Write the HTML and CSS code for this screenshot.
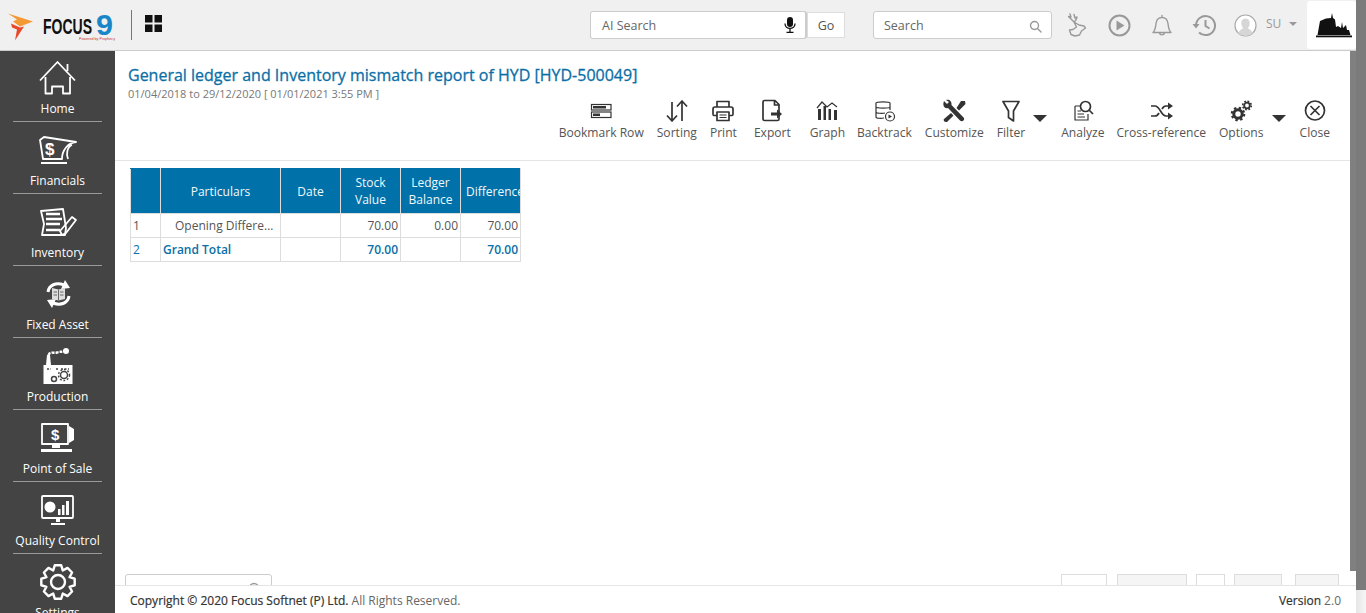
FILE: index.html
```html
<!DOCTYPE html>
<html lang="en">
<head>
<meta charset="utf-8">
<title>Focus 9</title>
<link rel="stylesheet" href="styles.css">
</head>
<body>
<div class="app">
  <header class="topbar">
    <div class="brand">
      <svg class="logo" width="110" height="31" viewBox="0 0 110 31">
        <path class="o1" d="M0 3.500 L25 11.500 L12 16.500 L5 11.500 L9 9.500 Z"/>
        <path class="o2" d="M3 13.500 L12 17.500 L16 16.500 L7 30.500 L9 19.500 L4 17.500 Z"/>
        <text class="focus" x="35" y="23.500" textLength="49" lengthAdjust="spacingAndGlyphs">FOCUS</text>
        <text class="nine" x="88" y="24.500" textLength="17" lengthAdjust="spacingAndGlyphs">9</text>
        <text class="tiny" x="71" y="30" textLength="36" lengthAdjust="spacingAndGlyphs">Powered by Prophecy</text>
      </svg>
      <span class="vline"></span>
      <svg class="appsgrid" width="17" height="17" viewBox="0 0 17 17"><rect width="7.5" height="7.5"/><rect x="9.5" width="7.5" height="7.5"/><rect y="9.5" width="7.5" height="7.5"/><rect x="9.5" y="9.5" width="7.5" height="7.5"/></svg>
    </div>
    <div class="aisearch">
      <div class="field field-ai"><span>AI Search</span>
        <svg width="12" height="16" viewBox="0 0 12 16"><rect x="3" y="0" width="6" height="10" rx="3" class="fk"/><path d="M1 6.5 C1 13 11 13 11 6.5 M6 12 V15 M2.500 15.400 H9.500" class="sk"/></svg>
      </div>
      <button class="go">Go</button>
    </div>
    <div class="field field-search"><span>Search</span>
      <svg width="13" height="13" viewBox="0 0 13 13"><circle cx="5.500" cy="5.500" r="4" class="sg"/><path d="M8.500 8.500 L12 12" class="sg"/></svg>
    </div>
    <div class="tools">
      <svg class="t-deer" width="20" height="24" viewBox="0 0 20 24"><path class="sg" d="M3 1 L4 4 L1.500 3.500 L5 7 L7 9 M7 1.500 L8 5 L10 4 L9 7 L7 9 L12 12 L17 13 L18.500 15 L14.500 18 L12.500 22 L8 23 L4 21.500 L2.500 17 L6 16.500 L9.500 14 L7 9"/></svg>
      <svg class="t-play" width="23" height="23" viewBox="0 0 23 23"><circle cx="11.500" cy="11.500" r="10" class="sg2"/><path d="M8.500 6.500 L16.500 11.500 L8.500 16.500 Z" class="fg"/></svg>
      <svg class="t-bell" width="22" height="23" viewBox="0 0 22 23"><path class="sg" d="M11 1.500 V3.500 M2 18.500 C4.500 16 4.500 13 5 9.500 C5.500 5.500 8 3.500 11 3.500 C14 3.500 16.500 5.500 17 9.500 C17.500 13 17.500 16 20 18.500 Z M8.500 19 C9 21.500 13 21.500 13.500 19"/></svg>
      <svg class="t-hist" width="24" height="23" viewBox="0 0 24 23"><path class="sg2" d="M4 11.500 A9.500 9.500 0 1 1 7 18.500"/><path class="fg" d="M0.500 10 H7.500 L4 14.500 Z"/><path class="sg2" d="M13.500 6 V12 L17.500 14.500"/></svg>
      <svg class="t-user" width="23" height="23" viewBox="0 0 23 23"><circle cx="11.500" cy="11.500" r="10.500" class="avatar"/><path class="avatar-f" d="M4.500 19.500 C5 15.500 8.500 15.500 9 14 C7.500 12 7 10 7.500 7.500 C8.500 3.500 14.500 3.500 15.500 7.500 C16 10 15.500 12 14 14 C14.500 15.500 18 15.500 18.500 19.500 C14.500 22.500 8.500 22.500 4.500 19.500 Z"/></svg>
      <span class="su">SU</span>
      <span class="su-caret"></span>
    </div>
    <div class="company">
      <svg width="36" height="26" viewBox="0 0 36 26"><path class="fk" d="M1.500 23 L4 9 L10 6.500 L15 6 L16 1 L17 6 L19 7.500 L20 15 L22 14 L25 16 L26 10 L27 16 L30 13 L31 18 L33 18 L34.500 23 Z"/><rect class="fk" x="0" y="23.500" width="36" height="1.800"/></svg>
    </div>
  </header>

  <div class="body-row">
    <nav class="sidebar">
      <a class="nav-item">
        <svg class="nav-icon" width="40" height="36" viewBox="0 0 40 36"><path class="sw" d="M2 20.500 L19.500 2 L37 20.500 M7.500 17 V33.500 H14 V26.500 H25 V33.500 H32 V17 M29.500 11 V4"/></svg>
        <span>Home</span>
      </a>
      <a class="nav-item">
        <svg class="nav-icon" width="40" height="36" viewBox="0 0 40 36"><path class="sw" d="M2 8 L6 5 L38 10 C30 11 24 18 24 27 H5 Z M34 13 C29 15 28 22 30 27"/><text class="dollar" x="7" y="23">$</text><rect class="fw" x="3" y="30" width="26" height="2"/></svg>
        <span>Financials</span>
      </a>
      <a class="nav-item">
        <svg class="nav-icon" width="40" height="36" viewBox="0 0 40 36"><path class="sw" d="M3 7 L25 5 L28 24 L27 31 L4 31 L6 20 Z"/><path class="swt" d="M8 10 H22 M8 15 H24 M8 20 H22 M8 26 H22"/><path class="sw" d="M22 27 L24 31 L28 29 L38 16 L34 13 Z"/></svg>
        <span>Inventory</span>
      </a>
      <a class="nav-item">
        <svg class="nav-icon" width="40" height="36" viewBox="0 0 40 36"><path class="swb" d="M10 16 C11 9 18 6 26 9 M31 20 C30 27 23 30 15 27"/><path class="fw" d="M27 4 L32 12 L23 13 Z M14 32 L9 24 L18 23 Z"/><path class="fbook" d="M14 12 L20.500 13.500 L27 12 V23 L20.500 24.500 L14 23 Z"/><path class="cut2" d="M20.500 13.500 V24.500 M15.500 16 H19 M15.500 19 H19 M22 16 H25.500 M22 19 H25.500"/></svg>
        <span>Fixed Asset</span>
      </a>
      <a class="nav-item">
        <svg class="nav-icon" width="40" height="36" viewBox="0 0 40 36"><path class="fw" d="M5.500 17 H8 L9 7 H12 L13 17 H34.500 V36 H5.500 Z"/><path class="smoke" d="M10.500 7 C12 3 16 5.500 19 4.500 C22 3.500 24 4 27 3"/><circle class="fw" cx="28" cy="3" r="3"/><circle class="gearcut" cx="26" cy="27" r="3.500"/><circle class="teethcut" cx="26" cy="27" r="5.500"/><circle class="gearcut" cx="16" cy="31" r="2.500"/><path class="cut" d="M9 21 H13 M18 21 H21 M23 21 H31"/></svg>
        <span>Production</span>
      </a>
      <a class="nav-item">
        <svg class="nav-icon" width="40" height="36" viewBox="0 0 40 36"><rect class="sw" x="4" y="4" width="26" height="20"/><text class="dollar2" x="13" y="20">$</text><path class="fw" d="M31 6 L36 9 V20 L31 23 Z M14 25 H22 V28 H14 Z M3 29 H34 V32 H3 Z"/></svg>
        <span>Point of Sale</span>
      </a>
      <a class="nav-item">
        <svg class="nav-icon" width="40" height="36" viewBox="0 0 40 36"><rect class="sw" x="4" y="4" width="31" height="22" rx="1"/><circle class="fw" cx="12" cy="15" r="5.500"/><path class="fw" d="M20 17 H22.500 V23 H20 Z M24 13 H26.500 V23 H24 Z M28 9 H31 V23 H28 Z M18 27 H22 V30 H18 Z M13 31 H27 V33 H13 Z"/></svg>
        <span>Quality Control</span>
      </a>
      <a class="nav-item nav-last">
        <svg class="nav-icon nav-gear" width="40" height="40" viewBox="-20 -20 40 40"><path class="swg" d="M-4.780 -11.550 L-3.240 -16.690 L3.240 -16.690 L4.780 -11.550 L9.510 -14.090 L14.090 -9.510 L11.550 -4.780 L16.690 -3.240 L16.690 3.240 L11.550 4.780 L14.090 9.510 L9.510 14.090 L4.780 11.550 L3.240 16.690 L-3.240 16.690 L-4.780 11.550 L-9.510 14.090 L-14.090 9.510 L-11.550 4.780 L-16.690 3.240 L-16.690 -3.240 L-11.550 -4.780 L-14.090 -9.510 L-9.510 -14.090 Z"/><circle class="swg" r="7"/></svg>
        <span>Settings</span>
      </a>
    </nav>

    <main class="main">
      <section class="report-head">
        <h1 class="title">General ledger and Inventory mismatch report of HYD [HYD-500049]</h1>
        <p class="subtitle">01/04/2018 to 29/12/2020 [ 01/01/2021 3:55 PM ]</p>
        <div class="toolbar">
          <a class="tool">
            <svg width="26" height="24" viewBox="0 0 26 24"><rect class="tl" x="3.500" y="5.500" width="19.500" height="5.500"/><rect class="td" x="5" y="7" width="13" height="2.500"/><rect class="tl" x="3.500" y="13" width="19.500" height="5.500"/><rect class="td" x="5" y="14.500" width="7" height="2.500"/></svg>
            <span>Bookmark Row</span>
          </a>
          <a class="tool">
            <svg width="26" height="24" viewBox="0 0 26 24"><path class="tb" d="M8 3 V22 M3 16.500 L8 22 L13 16.500 M18 22 V2 M13 7.500 L18 2 L23 7.500"/></svg>
            <span>Sorting</span>
          </a>
          <a class="tool">
            <svg width="26" height="24" viewBox="0 0 26 24"><path class="tb" d="M7 8 V2.500 H19 V8 M7 16.500 H4 C3 16.500 3 16 3 15 V10 C3 8.500 4 8 5 8 H21 C22 8 23 8.500 23 10 V15 C23 16 23 16.500 22 16.500 H19 M7 13 H19 V21.500 H7 Z"/><path class="tl" d="M9.500 16 H16.500 M9.500 18.500 H16.500"/></svg>
            <span>Print</span>
          </a>
          <a class="tool tool-wide">
            <svg width="26" height="24" viewBox="0 0 26 24"><path class="tb" d="M20 13 V5.500 L16 1.500 H5.500 C4.500 1.500 4 2 4 3 V20 C4 21 4.500 21.500 5.500 21.500 H18.500 C19.500 21.500 20 21 20 20 V17 M15.500 2 V6 H20"/><path class="td0" d="M12 13.500 H18 V10.500 L23 15 L18 19.500 V16.500 H12 Z"/></svg>
            <span>Export</span>
          </a>
          <a class="tool tool-snug">
            <svg width="26" height="24" viewBox="0 0 26 24"><path class="tl" d="M3 9 L8 3 L13 8 L18 4 L23 8"/><path class="td0" d="M4 10 H7 V21 H4 Z M9.500 7 H12 V21 H9.500 Z M14.500 10 H17 V21 H14.500 Z M20 11 H23 V21 H20 Z"/></svg>
            <span>Graph</span>
          </a>
          <a class="tool">
            <svg width="26" height="24" viewBox="0 0 26 24"><path class="tl" d="M5 4 C5 2.500 19 2.500 19 4 V8 C19 9.500 5 9.500 5 8 Z M5 8 V13 C5 14.500 12 14.500 14 14 M19 8 V11 M5 13 V18 C5 19.500 10 19.500 13 19"/><circle class="tl" cx="19" cy="17.500" r="4.500"/><path class="td0" d="M17.500 15.500 L21 17.500 L17.500 19.500 Z"/></svg>
            <span>Backtrack</span>
          </a>
          <a class="tool">
            <svg width="26" height="24" viewBox="0 0 26 24"><path class="td0" d="M3 2 L6 5 L8 3 L5 1 C8 0 11 2 10.500 6 L23 19 C24 21 21 23.500 19 21.500 L7 9 C4 10 1 7 3 2 Z M20 2 L24 2 L24.500 5 L18 11.500 L15.500 9 Z M10 14 L12.500 16.500 L6 23 C3 23.500 2 21 3 20 Z"/></svg>
            <span>Customize</span>
          </a>
          <a class="tool">
            <svg width="26" height="24" viewBox="0 0 26 24"><path class="tb" d="M5 2.500 H21 L15.500 12 V22 L10.500 18.500 V12 Z"/></svg>
            <span>Filter</span>
          </a>
          <span class="tool-caret"></span>
          <a class="tool tool-snug">
            <svg width="26" height="24" viewBox="0 0 26 24"><path class="tl" d="M5 7 H10 M5 7 V21 H18 V15 M7.500 12 H11 M7.500 15 H14 M7.500 18 H15"/><circle class="tb" cx="15.500" cy="7.500" r="5"/><path class="tb" d="M19 11 L23 15"/></svg>
            <span>Analyze</span>
          </a>
          <a class="tool">
            <svg width="26" height="24" viewBox="0 0 26 24"><path class="tb" d="M3 7 H7 C12 7 13 17 18 17 H22 M3 17 H7 C9 17 10.500 15 11 14 M14 10 C15 8 16 7 18 7 H22"/><path class="td0" d="M20 3.500 L25 7 L20 10.500 Z M20 13.500 L25 17 L20 20.500 Z"/></svg>
            <span>Cross-reference</span>
          </a>
          <a class="tool">
            <svg width="26" height="24" viewBox="0 0 26 24"><circle class="gear-ring" cx="10" cy="15" r="4.200"/><circle class="gear-teeth" cx="10" cy="15" r="6.200"/><circle class="gear-ring2" cx="19" cy="6.500" r="2.800"/><circle class="gear-teeth2" cx="19" cy="6.500" r="4.300"/></svg>
            <span>Options</span>
          </a>
          <span class="tool-caret"></span>
          <a class="tool">
            <svg width="26" height="24" viewBox="0 0 26 24"><circle class="tb" cx="13" cy="11.500" r="9.500"/><path class="tb" d="M8.500 7 L17.500 16 M17.500 7 L8.500 16"/></svg>
            <span>Close</span>
          </a>
        </div>
      </section>

      <section class="report">
        <table class="grid">
          <colgroup><col class="c1"><col class="c2"><col class="c3"><col class="c3"><col class="c3"><col class="c3"></colgroup>
          <thead>
            <tr><th></th><th>Particulars</th><th>Date</th><th>Stock<br>Value</th><th>Ledger<br>Balance</th><th class="clip">Difference</th></tr>
          </thead>
          <tbody>
            <tr><td>1</td><td class="indent">Opening Difference</td><td></td><td class="num">70.00</td><td class="num">0.00</td><td class="num">70.00</td></tr>
            <tr class="total"><td class="rownum">2</td><td>Grand Total</td><td></td><td class="num">70.00</td><td></td><td class="num">70.00</td></tr>
          </tbody>
        </table>
      </section>

      <div class="pager">
        <div class="pager-search">
          <svg width="13" height="13" viewBox="0 0 13 13"><circle cx="6" cy="6" r="4.500" class="sg"/></svg>
        </div>
        <div class="pager-btns">
          <button class="pg pg-first">First</button>
          <button class="pg pg-off pg-prev">Previous</button>
          <button class="pg pg-one">1</button>
          <button class="pg pg-off pg-next">Next</button>
          <button class="pg pg-off pg-lastb">Last</button>
        </div>
      </div>

      <footer class="footer">
        <div><span class="strong">Copyright © 2020 Focus Softnet (P) Ltd.</span> All Rights Reserved.</div>
        <div><span class="strong">Version</span> 2.0</div>
      </footer>
      <div class="inner-scroll"></div>
    </main>
  </div>
</div>
<div class="scrollbar"><div class="thumb"></div></div>
</body>
</html>
```

FILE: styles.css
```css
* { box-sizing: border-box; }
html, body { margin: 0; height: 100%; overflow: hidden; }
body { display: flex; font-family: "Open Sans", "Liberation Sans", sans-serif; font-size: 12px; color: #555; background: #fff; }
.app { width: 1356px; height: 613px; display: flex; flex-direction: column; }
.scrollbar { width: 10px; height: 613px; background: linear-gradient(to right, #e6e6e6, #f6f6f6); }
.thumb { height: 590px; background: #7b7b7b; }

/* top bar */
.topbar { height: 50px; flex: none; display: flex; align-items: center; background: #f0f0f0; box-shadow: 0 1px 0 #ccc; position: relative; z-index: 2; }
.brand { display: flex; align-items: center; width: 590px; padding-left: 8px; }
.logo { margin-top: 1px; flex: none; }
.o1 { fill: #f39a35; }
.o2 { fill: #e8492a; }
.focus { font-family: "Liberation Sans", sans-serif; font-weight: 700; font-size: 22px; fill: #111; }
.nine { font-family: "Liberation Sans", sans-serif; font-weight: 700; font-size: 29px; fill: #1a86c8; }
.tiny { font-family: "Liberation Sans", sans-serif; font-size: 3px; fill: #c33; }
.vline { width: 1px; height: 30px; background: #777; margin-left: 13px; }
.appsgrid { margin-left: 13px; margin-top: -3px; fill: #111; }
.aisearch { display: flex; align-items: center; }
.field { height: 28px; background: #fff; border: 1px solid #ccc; border-radius: 3px; display: flex; align-items: center; justify-content: space-between; color: #666; font-size: 12.5px; }
.field-ai { width: 217px; padding: 0 9px 0 11px; border-width: 1px 2px 1px 1px; }
.field-search { width: 179px; margin-left: 28px; padding: 0 9px 0 10px; }
.field-search svg { margin-top: 2px; }
.go { width: 38px; height: 26px; border: 1px solid #ddd; background: #fff; padding: 0; font: 12.5px "Open Sans", sans-serif; color: #555; }
.fk { fill: #111; }
.sk { fill: none; stroke: #111; stroke-width: 1.300; }
.sg { fill: none; stroke: #999; stroke-width: 1.400; stroke-linejoin: round; stroke-linecap: round; }
.sg2 { fill: none; stroke: #999; stroke-width: 2; }
.fg { fill: #999; }
.tools { flex: 1; display: flex; align-items: center; padding-left: 15px; }
.t-deer { margin-right: 21px; }
.t-play { margin-right: 20px; }
.t-bell { margin-right: 19px; }
.t-hist { margin-right: 18px; }
.t-user { margin-right: 9px; }
.avatar { fill: #fff; stroke: #aaa; stroke-width: 1.200; }
.avatar-f { fill: #d6d6d6; }
.su { font-size: 12px; color: #999; margin-top: -3px; }
.su-caret { width: 0; height: 0; border: 4px solid transparent; border-top: 4px solid #999; border-bottom: 0; margin: -2px 0 0 8px; }
.company { width: 49px; height: 48px; background: #fff; border-radius: 3px; display: flex; align-items: center; justify-content: center; padding: 0 0 0 4px; margin-top: -1px; }

/* layout below top bar */
.body-row { flex: 1; display: flex; min-height: 0; }

/* sidebar */
.sidebar { width: 115px; flex: none; background: #444; overflow: hidden; padding: 0 13px; color: #fff; }
.nav-item { height: 72px; display: flex; flex-direction: column; align-items: center; padding-top: 10px; border-bottom: 1px solid #999; }
.nav-icon { flex: none; }
.nav-item span { line-height: 16px; margin-top: 5px; white-space: nowrap; font-size: 12px; }
.nav-last { border-bottom: 0; padding-top: 8px; }
.nav-gear { height: 40px; }
.nav-last span { margin-top: 3px; }
.sw { fill: none; stroke: #fff; stroke-width: 1.800; stroke-linejoin: round; }
.swt { fill: none; stroke: #fff; stroke-width: 2.600; }
.swb { fill: none; stroke: #fff; stroke-width: 3; }
.swg { fill: none; stroke: #fff; stroke-width: 2.400; stroke-linejoin: round; }
.fw { fill: #fff; }
.fbook { fill: #ddd; }
.cut2 { fill: none; stroke: #666; stroke-width: 1; }
.smoke { fill: none; stroke: #fff; stroke-width: 2.400; stroke-dasharray: 3 1; }
.dollar { font-family: "Liberation Sans", sans-serif; font-weight: 700; font-size: 17px; fill: #fff; }
.dollar2 { font-family: "Liberation Sans", sans-serif; font-weight: 700; font-size: 15px; fill: #fff; }
.gearcut { fill: none; stroke: #444; stroke-width: 1.500; }
.teethcut { fill: none; stroke: #444; stroke-width: 1.500; stroke-dasharray: 1.800 1.800; }
.cut { fill: none; stroke: #444; stroke-width: 1.500; stroke-dasharray: 2 1.500; }

/* main */
.main { flex: 1; min-width: 0; display: flex; flex-direction: column; position: relative; background: #fff; }
.report-head { height: 111px; flex: none; padding: 14px 0 0 13px; border-bottom: 1px solid #e5e5e5; }
.title { margin: 0; font-size: 16px; line-height: 22px; font-weight: 400; color: #0b6fa6; white-space: nowrap; -webkit-text-stroke: 0.3px #0b6fa6; }
.subtitle { margin: 0; font-size: 11px; line-height: 16px; color: #777; }
.toolbar { display: flex; justify-content: flex-end; padding-right: 19.500px; margin-top: -3px; }
.tool { display: flex; flex-direction: column; align-items: center; padding: 0 6.500px; color: #555; }
.tool svg { flex: none; }
.tool span { line-height: 16px; margin-top: 2px; white-space: nowrap; font-size: 12.08px; }
.tool-wide { padding: 0 12.500px 0 10.500px; }
.tool-snug { padding-right: 5.500px; }
.tl { fill: none; stroke: #333; stroke-width: 1.200; }
.tb { fill: none; stroke: #333; stroke-width: 1.700; stroke-linejoin: round; }
.td { fill: #333; }
.td0 { fill: #333; }
.tool-caret { width: 0; height: 0; border: 7px solid transparent; border-top: 7px solid #333; border-bottom: 0; margin: 16px 7.500px 0 1.500px; }
.gear-ring { fill: none; stroke: #333; stroke-width: 3; }
.gear-teeth { fill: none; stroke: #333; stroke-width: 2.200; stroke-dasharray: 2.400 2.470; }
.gear-ring2 { fill: none; stroke: #333; stroke-width: 1.800; }
.gear-teeth2 { fill: none; stroke: #333; stroke-width: 1.600; stroke-dasharray: 1.800 1.570; }

/* grid */
.report { flex: 1; min-height: 0; padding: 7px 0 0 15px; }
.grid { border-collapse: collapse; table-layout: fixed; width: 391px; font-size: 12px; }
.c1 { width: 30px; }
.c2 { width: 120px; }
.c3 { width: 60px; }
.grid th { height: 45px; background: #0071a9; color: #f2f8fb; font-weight: 400; line-height: 17px; border: 1px solid #ddd; padding: 0 5px; text-align: center; border-top-color: #0071a9; border-left-color: #ddd; }
.grid th.clip { overflow: hidden; white-space: nowrap; text-align: left; }
.grid td { height: 24px; border: 1px solid #ddd; padding: 0 2px; white-space: nowrap; overflow: hidden; text-overflow: ellipsis; color: #555; }
.grid td.indent { padding-left: 14px; padding-right: 6px; }
.grid td.num { text-align: right; }
.total td { color: #0b6fa6; font-weight: 600; }
.total td.rownum { font-weight: 400; }

/* pager, cut off by the footer */
.pager { height: 11px; flex: none; overflow: hidden; display: flex; justify-content: space-between; padding: 0 17px 0 10px; }
.pager-search { width: 147px; height: 28px; border: 1px solid #ccc; border-radius: 3px; padding: 7px 10px 0 0; display: flex; justify-content: flex-end; }
.pager-btns { display: flex; gap: 9px; }
.pg { height: 30px; border: 1px solid #ddd; background: #fff; padding: 0; font: 12px "Open Sans", sans-serif; color: #333; }
.pg-off { background: #f5f5f5; }
.pg-first { width: 46px; margin-right: 1px; }
.pg-prev { width: 70px; }
.pg-one { width: 29px; }
.pg-next { width: 48px; margin-right: 4px; }
.pg-lastb { width: 44px; }

/* footer */
.footer { height: 28px; flex: none; display: flex; justify-content: space-between; align-items: center; padding: 2px 15px 0 15px; border-top: 1px solid #e5e5e5; background: #fff; color: #666; font-size: 12px; }
.strong { color: #333; -webkit-text-stroke: 0.2px #333; }

.inner-scroll { position: absolute; top: 0; right: 0; width: 6px; height: 521px; background: #808080; }
```
